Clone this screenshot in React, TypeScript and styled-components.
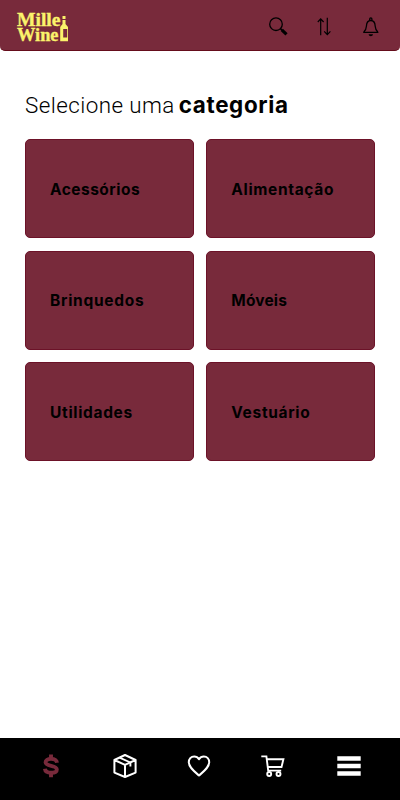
import React from "react";
import styled, { createGlobalStyle } from "styled-components";

const wine = "#782a3b";

const GlobalStyle = createGlobalStyle`
  * { box-sizing: border-box; }
  body { margin: 0; background: #fff; color: #000; font-family: Roboto, "Open Sans", sans-serif; }
`;

const Screen = styled.div`
  display: flex;
  flex-direction: column;
  height: 100vh;
`;

const Header = styled.header`
  display: flex;
  justify-content: space-between;
  height: 51px;
  padding: 0 17px 0 16px;
  background: ${wine};
  border-bottom: 1px solid #650c1b;
  border-radius: 0 0 5px 5px;
`;

const Logo = styled.svg`
  width: 54px;
  height: 50px;
  fill: #fbf36b;
  font-family: "Liberation Serif", serif;
  font-weight: 700;
  text { stroke: #fbf36b; stroke-width: 0.35px; }
`;

const Actions = styled.div`
  display: flex;
  align-items: center;
  gap: 22px;
  padding-top: 3px;
`;

const Action = styled.button`
  display: flex;
  width: 24.5px;
  height: 24px;
  padding: 0;
  border: 0;
  background: none;
  color: #000;
  svg { flex: none; width: 24px; height: 24px; }
`;

const Main = styled.main`
  flex: 1;
  padding: 39.5px 25px 0;
`;

const Title = styled.h1`
  display: flex;
  align-items: baseline;
  gap: 4px;
  margin: 0 0 20.5px;
  font-size: 22.4px;
  line-height: 28px;
  font-weight: 300;
  white-space: nowrap;
  letter-spacing: 0.44px;
  strong { font-family: Inter, sans-serif; font-size: 22.4px; font-weight: 700; letter-spacing: 0.65px; }
`;

const Grid = styled.div`
  display: grid;
  grid-template-columns: 1fr 1fr;
  grid-auto-rows: 99px;
  gap: 12.6px;
`;

const Card = styled.button`
  display: flex;
  align-items: center;
  padding: 2px 0 0 24px;
  border: 1px solid #6c1228;
  border-radius: 5px;
  background: ${wine};
  color: #000;
  text-align: left;
`;

const Label = styled.span<{ $spacing: number }>`
  font: 700 15.5px/20px Inter, sans-serif;
  letter-spacing: ${(p) => p.$spacing}px;
`;

const Nav = styled.nav`
  display: grid;
  grid-template-columns: repeat(5, 24px);
  column-gap: 50px;
  justify-content: center;
  height: 62px;
  padding: 15px 0 0 0;
  background: #000;
`;

const NavItem = styled.button<{ $active?: boolean; $shift?: number }>`
  display: flex;
  align-items: center;
  justify-content: center;
  height: 25px;
  padding: 0;
  margin-left: ${(p) => p.$shift ?? 0}px;
  margin-right: ${(p) => -(p.$shift ?? 0)}px;
  border: 0;
  background: none;
  color: ${(p) => (p.$active ? wine : "#fff")};
  svg { flex: none; width: 24px; height: 24px; }
`;

const categories = [
  { name: "Acessórios", spacing: 0.48 },
  { name: "Alimentação", spacing: 0.66 },
  { name: "Brinquedos", spacing: 0.73 },
  { name: "Móveis", spacing: 0.15 },
  { name: "Utilidades", spacing: 0.68 },
  { name: "Vestuário", spacing: 0.68 },
];

const SearchIcon = () => (
  <svg viewBox="0 0 24 24" fill="none" stroke="currentColor">
    <circle cx="10" cy="9.2" r="6.3" strokeWidth="1.3" />
    <path d="M14.5 13.7l1.7 1.6" strokeWidth="1.6" />
    <path d="M15.8 14.9l4.7 4.5" strokeWidth="3.2" />
  </svg>
);

const SortIcon = () => (
  <svg viewBox="0 0 24 24" fill="none" stroke="currentColor" strokeWidth="1.2">
    <path d="M8.7 20.2V3.7M5.8 7l2.9-3.2L11.6 7M15.3 2.7v17M12.2 16.4l3.1 3.2 3.1-3.2" />
  </svg>
);

const BellIcon = () => (
  <svg viewBox="0 0 24 24" fill="none" stroke="currentColor" strokeWidth="1.3">
    <path d="M4.2 17.3h15.2M4.8 17c2-1.6 2.4-3 2.6-5.8.2-3.5 1.7-5.7 4.4-5.7s4.2 2.2 4.4 5.7c.2 2.8.6 4.2 2.6 5.8" />
    <path d="M10.7 5.3V3.9a1.1 1.1 0 0 1 2.2 0v1.4" />
    <path d="M9.6 19.3H14c-.3 1.4-1.1 1.9-2.2 1.9s-1.9-.5-2.2-1.9z" fill="currentColor" stroke="none" />
  </svg>
);

const DollarIcon = () => (
  <svg viewBox="0 0 24 24" fill="none" stroke="currentColor" strokeWidth="3.9">
    <path d="M18 8.8C17.7 6.4 15.5 4.9 12 4.9c-3.4 0-5.4 1.3-5.4 3.3 0 4.8 11.2 2.4 11.2 7.2 0 2.1-2.2 3.4-5.7 3.4-3.7 0-5.9-1.5-6.2-4" />
    <path d="M12 .6v4M12 19v4.2" />
  </svg>
);

const BoxIcon = () => (
  <svg viewBox="0 0 24 24" fill="none" stroke="currentColor" strokeWidth="2" strokeLinejoin="round">
    <path d="M12 1L22.6 6v12.6L12 23 1.4 18.6V6zM1.4 6L12 10.8 22.6 6M12 10.8V23" />
    <path d="M6.6 3.6l10.8 4.9v4" strokeWidth="1.9" />
  </svg>
);

const HeartIcon = () => (
  <svg viewBox="0 0 24 24" fill="none" stroke="currentColor" strokeWidth="2" strokeLinejoin="round">
    <path d="M12 5.2C10.6 3 9 2.5 7.2 2.5c-3.3 0-5.4 2.5-5.4 5.8 0 5 5.3 9 10.2 13.2 4.9-4.2 10.2-8.2 10.2-13.2 0-3.3-2.1-5.8-5.4-5.8-1.8 0-3.4.5-4.8 2.7z" />
  </svg>
);

const CartIcon = () => (
  <svg viewBox="0 0 24 24" fill="none" stroke="currentColor" strokeWidth="1.9">
    <path d="M.3 2.4h5.1l1.8 14.2h13M6 5.3h16.4L20.5 13H7" />
    <circle cx="8.2" cy="20" r="2" />
    <circle cx="17.5" cy="20" r="2" />
  </svg>
);

const MenuIcon = () => (
  <svg viewBox="0 0 24 24" fill="currentColor">
    <path d="M.3 2.3h23.4v4.4H.3zM.3 9.8h23.4v4.4H.3zM.3 17.3h23.4v4.4H.3z" />
  </svg>
);

export default function App() {
  return (
    <Screen>
      <GlobalStyle />
      <Header>
        <Logo viewBox="0 0 54 50" role="img" aria-label="Mille Wine">
          <text x="1" y="25.5" fontSize="19" textLength="43.5" lengthAdjust="spacingAndGlyphs">Mille</text>
          <text x="1" y="41" fontSize="18" textLength="41.5" lengthAdjust="spacingAndGlyphs">Wine</text>
          <path d="M46.5 16h3v3h-3zM46.5 20h3v4l2.5 3v14.2h-7.8V27l2.3-3z" />
          <path d="M47.2 29h4v8.5h-4z" fill={wine} />
        </Logo>
        <Actions>
          <Action aria-label="Buscar"><SearchIcon /></Action>
          <Action aria-label="Ordenar"><SortIcon /></Action>
          <Action aria-label="Notificações"><BellIcon /></Action>
        </Actions>
      </Header>
      <Main>
        <Title>Selecione uma <strong>categoria</strong></Title>
        <Grid>
          {categories.map((c) => (
            <Card key={c.name}><Label $spacing={c.spacing}>{c.name}</Label></Card>
          ))}
        </Grid>
      </Main>
      <Nav>
        <NavItem $active aria-label="Vendas" $shift={-1}><DollarIcon /></NavItem>
        <NavItem aria-label="Produtos" $shift={-1}><BoxIcon /></NavItem>
        <NavItem aria-label="Favoritos" $shift={-1}><HeartIcon /></NavItem>
        <NavItem aria-label="Carrinho" $shift={-1}><CartIcon /></NavItem>
        <NavItem aria-label="Menu" $shift={1}><MenuIcon /></NavItem>
      </Nav>
    </Screen>
  );
}
